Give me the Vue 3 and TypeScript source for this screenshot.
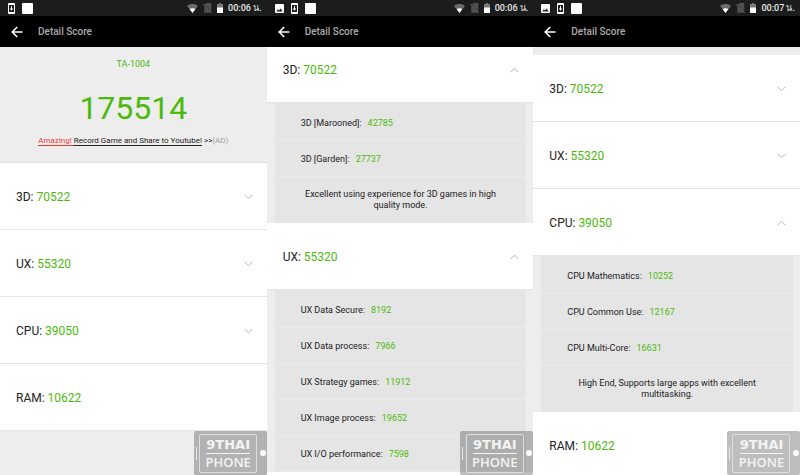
<script setup lang="ts">
import { reactive } from 'vue'

interface Metric {
  label: string
  value: number
}

interface Section {
  name: string
  total: number
  open: boolean
  metrics: Metric[]
  note?: string
}

interface Screen {
  id: string
  clock: string
  hasPicture: boolean
  position: 'top' | 'scrolled' | 'strip'
  sections: Section[]
}

const graphics: Metric[] = [
  { label: '3D [Marooned]:', value: 42785 },
  { label: '3D [Garden]:', value: 27737 },
]
const experience: Metric[] = [
  { label: 'UX Data Secure:', value: 8192 },
  { label: 'UX Data process:', value: 7966 },
  { label: 'UX Strategy games:', value: 11912 },
  { label: 'UX Image process:', value: 19652 },
  { label: 'UX I/O performance:', value: 7598 },
]
const processor: Metric[] = [
  { label: 'CPU Mathematics:', value: 10252 },
  { label: 'CPU Common Use:', value: 12167 },
  { label: 'CPU Multi-Core:', value: 16631 },
]

const catalogue: Omit<Section, 'open'>[] = [
  {
    name: '3D',
    total: 70522,
    metrics: graphics,
    note: 'Excellent using experience for 3D games in high quality mode.',
  },
  { name: 'UX', total: 55320, metrics: experience },
  {
    name: 'CPU',
    total: 39050,
    metrics: processor,
    note: 'High End, Supports large apps with excellent multitasking.',
  },
  { name: 'RAM', total: 10622, metrics: [] },
]

function buildSections(names: string[], opened: string[]): Section[] {
  return catalogue
    .filter((s) => names.includes(s.name))
    .map((s) => ({ ...s, open: opened.includes(s.name) }))
}

const everything = ['3D', 'UX', 'CPU', 'RAM']

const screens = reactive<Screen[]>([
  { id: 'a', clock: '00:06 น.', hasPicture: false, position: 'top', sections: buildSections(everything, []) },
  { id: 'b', clock: '00:06 น.', hasPicture: true, position: 'scrolled', sections: buildSections(['3D', 'UX'], ['3D', 'UX']) },
  { id: 'c', clock: '00:07 น.', hasPicture: true, position: 'strip', sections: buildSections(everything, ['CPU']) },
])

function toggle(section: Section): void {
  if (section.metrics.length) section.open = !section.open
}
</script>

<template>
  <main class="screens">
    <section v-for="screen in screens" :key="screen.id" class="screen">
      <div class="status">
        <div class="status-left">
          <svg v-if="screen.hasPicture" width="9" height="9" viewBox="0 0 9 9" aria-hidden="true">
            <path fill="#fff" fill-rule="evenodd" d="M1 0h7a1 1 0 0 1 1 1v7a1 1 0 0 1-1 1H1a1 1 0 0 1-1-1V1a1 1 0 0 1 1-1zM1.3 7.4h6.4L5.6 4.5 4 6.5 2.9 5.3z" />
          </svg>
          <svg width="7" height="11" viewBox="0 0 7 11" aria-hidden="true">
            <rect width="7" height="11" rx="1" fill="#fff" />
            <rect x="1" y="2" width="5" height="7" fill="#1b1d1c" />
            <path fill="#fff" d="M3 3h1v2.5h1.3L3.5 7.7 1.7 5.5H3z" />
          </svg>
          <svg width="11" height="11" viewBox="0 0 11 11" aria-hidden="true">
            <rect width="11" height="11" rx="1" fill="#fff" />
          </svg>
        </div>
        <div class="status-right">
          <svg width="11" height="9" viewBox="0 0 11 9" aria-hidden="true">
            <path fill="#6b6d6c" d="M0 2C3-.6 8-.6 11 2L5.500 9z" />
            <path fill="#fff" d="M2.700 5.100C4.200 3.900 6.800 3.900 8.300 5.100L5.500 9z" />
          </svg>
          <svg width="9" height="10" viewBox="0 0 9 10" aria-hidden="true">
            <path fill="#4f5150" d="M3.500 0H8.300V8.200L2 1.600zM1.200 2.800L8 9.700H1.200z" />
            <path stroke="#777978" d="M.4 1l8.200 8.600" />
          </svg>
          <svg width="6" height="10" viewBox="0 0 6 10" aria-hidden="true">
            <path fill="#777978" d="M2 0h2v1h2v4H0V1h2z" />
            <path fill="#fff" d="M0 4.500h6V10H0z" />
          </svg>
          <time class="clock">{{ screen.clock }}</time>
        </div>
      </div>

      <header class="bar">
        <button type="button" class="back" aria-label="Back">
          <svg width="12" height="12" viewBox="0 0 12 12" fill="none" stroke="#fff" stroke-width="1.600" aria-hidden="true">
            <path d="M11.500 6H1.500M6.200 1L1.200 6l5 5" />
          </svg>
        </button>
        <h1 class="title">Detail Score</h1>
      </header>

      <div class="body" :class="screen.position">
        <div v-if="screen.position === 'top'" class="summary">
          <p class="device">TA-1004</p>
          <p class="score">175514</p>
          <p class="promo">
            <a href="#"><span class="hot">Amazing! </span>Record Game and Share to Youtube!</a>
            &gt;&gt;<span class="ad">(AD)</span>
          </p>
        </div>

        <div class="list">
          <div v-for="section in screen.sections" :key="section.name" class="entry">
            <button
              type="button"
              class="row"
              :class="{ open: section.open }"
              :aria-expanded="section.open"
              @click="toggle(section)"
            >
              <span>{{ section.name }}: <span class="value">{{ section.total }}</span></span>
              <svg
                v-if="section.metrics.length"
                class="chevron"
                width="9"
                height="6"
                viewBox="0 0 9 6"
                fill="none"
                stroke="#b4b4b4"
                aria-hidden="true"
              >
                <path d="M.5 .8l4 4 4-4" />
              </svg>
            </button>
            <div v-if="section.open" class="group">
              <dl class="metrics">
                <div v-for="m in section.metrics" :key="m.label" class="metric">
                  <dt>{{ m.label }}</dt>
                  <dd class="value">{{ m.value }}</dd>
                </div>
              </dl>
              <p v-if="section.note" class="note">{{ section.note }}</p>
            </div>
          </div>
        </div>
      </div>

      <div class="mark">
        <i class="speaker"></i>
        <div class="mark-frame">
          <span class="mark-top">9THAI</span>
          <span class="mark-bottom">PHONE</span>
        </div>
        <i class="dot"></i>
      </div>
    </section>
  </main>
</template>

<style>
body {
  margin: 0;
  background: #ededed;
}
</style>

<style scoped>
.screens {
  display: grid;
  grid-template-columns: repeat(3, 1fr);
  height: 100vh;
  font-family: Roboto, "Noto Sans", sans-serif;
  color: #222;
}

.screen {
  position: relative;
  display: flex;
  flex-direction: column;
  min-width: 0;
  overflow: hidden;
  background: #ededed;
}

.status {
  display: flex;
  flex: none;
  justify-content: space-between;
  align-items: center;
  height: 16px;
  padding: 0 5px 0 8px;
  background: #1b1d1c;
}

.status-left {
  display: flex;
  align-items: center;
  gap: 7px;
}

.status-right {
  display: flex;
  align-items: center;
  gap: 5px;
}

.clock {
  padding-top: 1px;
  font-size: 9px;
  font-weight: 500;
  line-height: 15px;
  color: #e8e8e8;
  white-space: nowrap;
}

.bar {
  display: flex;
  flex: none;
  align-items: center;
  gap: 15px;
  height: 31px;
  padding: 0 11px;
  background: #000;
}

.back {
  display: flex;
  padding: 0;
  border: 0;
  background: none;
  cursor: pointer;
}

.title {
  margin: 0;
  font-size: 10px;
  font-weight: 500;
  line-height: 16px;
  color: #aaa;
}

.body {
  flex: 1;
  min-height: 0;
  overflow: hidden;
}

.summary {
  display: flex;
  flex-direction: column;
  align-items: center;
  padding: 11px 0 15px;
  border-bottom: 1px solid #e3e3e3;
}

.summary p {
  margin: 0;
}

.device {
  font-size: 9px;
  line-height: 12px;
  color: #4cba0c;
}

.summary .score {
  margin: 20px 0 9px;
  font-size: 32px;
  line-height: 36px;
  color: #4cba0c;
}

.promo {
  font-size: 8px;
  line-height: 12px;
  white-space: nowrap;
}

.promo a {
  color: inherit;
  text-underline-offset: 2px;
}

.hot {
  color: #f03a35;
  text-decoration: underline;
  text-underline-offset: 2px;
}

.ad {
  color: #a0a0a0;
}

.scrolled {
  background: #fff;
}

.scrolled .list {
  margin-top: -11px;
}

.strip .list {
  padding-top: 8px;
}

.entry {
  background: #ededed;
}

.row {
  display: flex;
  justify-content: space-between;
  align-items: center;
  width: 100%;
  height: 67px;
  padding: 2px 14px 0 16px;
  border: 0;
  border-bottom: 1px solid #e5e5e5;
  background: #fff;
  font-family: inherit;
  font-size: 12px;
  line-height: 16px;
  color: #222;
  cursor: pointer;
}

.value {
  color: #4cba0c;
}

.open .chevron {
  transform: rotate(180deg);
}

.group {
  margin: 0 7px 0 8px;
  padding-top: 2px;
  background: #e5e5e5;
}

.metrics {
  margin: 0;
}

.metric {
  display: flex;
  align-items: center;
  gap: 6px;
  box-sizing: border-box;
  height: 36px;
  padding: 0 26px;
  border-bottom: 1px solid #ebebeb;
  font-size: 9px;
  line-height: 12px;
}

.metric dd {
  margin: 0;
}

.note {
  margin: 0;
  padding: 12px 24px;
  font-size: 9px;
  line-height: 11px;
  text-align: center;
}

.mark {
  position: absolute;
  right: 0;
  bottom: 0;
  display: flex;
  align-items: center;
  justify-content: space-between;
  box-sizing: border-box;
  width: 73px;
  height: 44px;
  padding: 0 1px 0 2px;
  border-radius: 2px;
  background: rgba(70, 70, 70, 0.35);
  color: #f4f4f4;
}

.speaker {
  width: 1px;
  height: 13px;
  background: #e8e8e8;
}

.mark-frame {
  display: flex;
  flex-direction: column;
  align-items: center;
  justify-content: center;
  box-sizing: border-box;
  width: 58px;
  height: 39px;
  border: 1px solid #dedede;
  border-radius: 2px;
}

.mark-top {
  border-bottom: 1px solid #f4f4f4;
  font-family: "DejaVu Sans", sans-serif;
  font-size: 13px;
  font-weight: 700;
  line-height: 16px;
}

.mark-bottom {
  font-family: "Open Sans", sans-serif;
  font-size: 13px;
  font-weight: 600;
  line-height: 16px;
}

.dot {
  width: 6px;
  height: 6px;
  border-radius: 50%;
  background: #fff;
}
</style>
